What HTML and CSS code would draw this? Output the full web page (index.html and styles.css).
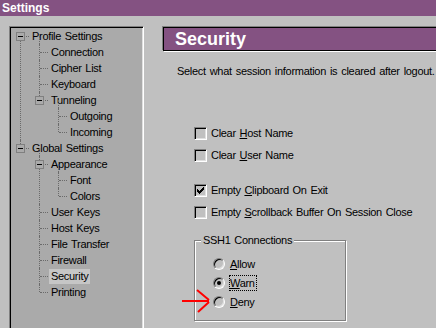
FILE: index.html
```html
<!DOCTYPE html>
<html lang="en">

<head>
  <title>Settings</title>
  <meta charset="utf-8" />
  <link rel="stylesheet" href="styles.css">
</head>

<body>
  <div class="titlebar">Settings</div>

  <div class="main">
    <div class="tree-panel">
      <ul class="tree">
        <li>
          <div class="row"><span class="twig"><span class="exp"></span></span><span class="lbl">Profile Settings</span></div>
          <ul>
            <li><div class="row"><span class="twig"></span><span class="lbl">Connection</span></div></li>
            <li><div class="row"><span class="twig"></span><span class="lbl">Cipher List</span></div></li>
            <li><div class="row"><span class="twig"></span><span class="lbl">Keyboard</span></div></li>
            <li>
              <div class="row"><span class="twig"><span class="exp"></span></span><span class="lbl">Tunneling</span></div>
              <ul>
                <li><div class="row"><span class="twig"></span><span class="lbl">Outgoing</span></div></li>
                <li><div class="row"><span class="twig"></span><span class="lbl">Incoming</span></div></li>
              </ul>
            </li>
          </ul>
        </li>
        <li>
          <div class="row"><span class="twig"><span class="exp"></span></span><span class="lbl">Global Settings</span></div>
          <ul>
            <li>
              <div class="row"><span class="twig"><span class="exp"></span></span><span class="lbl">Appearance</span></div>
              <ul>
                <li><div class="row"><span class="twig"></span><span class="lbl">Font</span></div></li>
                <li><div class="row"><span class="twig"></span><span class="lbl">Colors</span></div></li>
              </ul>
            </li>
            <li><div class="row"><span class="twig"></span><span class="lbl">User Keys</span></div></li>
            <li><div class="row"><span class="twig"></span><span class="lbl">Host Keys</span></div></li>
            <li><div class="row"><span class="twig"></span><span class="lbl">File Transfer</span></div></li>
            <li><div class="row"><span class="twig"></span><span class="lbl">Firewall</span></div></li>
            <li><div class="row"><span class="twig"></span><span class="lbl selected">Security</span></div></li>
            <li><div class="row"><span class="twig"></span><span class="lbl">Printing</span></div></li>
          </ul>
        </li>
      </ul>
    </div>

    <div class="pane">
      <div class="header">Security</div>
      <p class="desc">Select what session information is cleared after logout.</p>

      <div class="options">
        <div class="opt"><span class="check"></span><span>Clear <u>H</u>ost Name</span></div>
        <div class="opt"><span class="check"></span><span>Clear <u>U</u>ser Name</span></div>
        <div class="opt spaced"><span class="check">
            <svg width="7" height="7" viewBox="0 0 7 7" shape-rendering="crispEdges">
              <path d="M6 0h1v3h-1v1h-1v1h-1v1h-1v1h-1v-1h-1v-1h-1v-3h1v1h1v1h1v-1h1v-1h1z" fill="#000" />
            </svg>
          </span><span>Empty <u>C</u>lipboard On Exit</span></div>
        <div class="opt"><span class="check"></span><span>Empty <u>S</u>crollback Buffer On Session Close</span></div>
      </div>

      <div class="group">
        <span class="legend">SSH1 Connections</span>
        <div class="radio-row"><span class="radio"></span><span class="rlabel"><u>A</u>llow</span></div>
        <div class="radio-row"><span class="radio on"></span><span class="rlabel focus"><u>W</u>arn</span></div>
        <div class="radio-row"><span class="radio"></span><span class="rlabel"><u>D</u>eny</span></div>

        <svg class="arrow" width="34" height="26" viewBox="0 0 34 26">
          <path d="M2 13H29M17 2L29 12M29 14L18 24" stroke="#ff0000" stroke-width="2" fill="none" />
        </svg>
      </div>
    </div>
  </div>
</body>

</html>
```

FILE: styles.css
```css
body {
  margin: 0;
  overflow: hidden;
  background: #c0c0c0;
  font-family: "Liberation Sans", Arial, sans-serif;
  font-size: 11px;
  letter-spacing: -0.3px;
  word-spacing: 1px;
  color: #000;
}

.titlebar {
  height: 16px;
  line-height: 16px;
  padding-left: 2px;
  background: #845282;
  color: #fff;
  font-weight: bold;
  font-size: 12px;
  letter-spacing: 0;
  word-spacing: 0;
}

.main {
  display: flex;
  align-items: flex-start;
  height: 312px;
  overflow: hidden;
}

/* tree on the left */

.tree-panel {
  flex: none;
  box-sizing: border-box;
  width: 135px;
  height: 330px;
  margin: 10px 0 0 9px;
  padding: 1px 0 0 3px;
  background: #aaaaaa;
  border: 1px solid;
  border-color: #808080 #fff #fff #808080;
  box-shadow: inset 1px 1px #000, inset -1px -1px #dfdfdf;
}

.tree,
.tree ul {
  list-style: none;
  margin: 0;
  padding: 0;
}

.tree ul {
  margin-left: 19px;
  position: relative;
}

.tree ul::before {
  content: "";
  position: absolute;
  left: 7px;
  top: -8px;
  height: 8px;
  border-left: 1px dotted #6a6a6a;
}

.tree li {
  position: relative;
}

.tree li::before {
  content: "";
  position: absolute;
  left: 7px;
  top: 0;
  bottom: 0;
  border-left: 1px dotted #6a6a6a;
}

.tree li:last-child::before {
  bottom: auto;
  height: 8px;
}

.tree > li:first-child::before {
  top: 8px;
  height: auto;
  bottom: 0;
}

.row {
  display: flex;
  align-items: center;
  height: 16px;
}

.twig {
  position: relative;
  flex: none;
  width: 17px;
  height: 16px;
}

.twig::after {
  content: "";
  position: absolute;
  left: 8px;
  top: 8px;
  width: 8px;
  border-top: 1px dotted #6a6a6a;
}

.exp {
  position: absolute;
  z-index: 1;
  left: 3px;
  top: 4px;
  box-sizing: border-box;
  width: 9px;
  height: 9px;
  border: 1px solid #808080;
  background: #aaaaaa;
}

.exp::after {
  content: "";
  position: absolute;
  left: 1px;
  top: 3px;
  width: 5px;
  height: 1px;
  background: #000;
}

.lbl {
  padding: 0 2px;
  line-height: 15px;
  white-space: nowrap;
}

.lbl.selected {
  background: #c6c6c6;
}

/* right pane */

.pane {
  flex: none;
  margin: 11px 0 0 19px;
}

.header {
  box-sizing: border-box;
  width: 320px;
  height: 24px;
  padding-left: 11px;
  border: 1px solid #000;
  box-shadow: -1px -1px #808080, 1px 1px #fff;
  background: #845282;
  color: #fff;
  font-size: 18px;
  font-weight: bold;
  line-height: 22px;
  letter-spacing: 0;
  word-spacing: 0;
}

.desc {
  margin: 14px 0 0 14px;
  line-height: 13px;
  word-spacing: 1.2px;
  white-space: nowrap;
}

.options {
  margin: 44px 0 0 31px;
}

.opt {
  display: flex;
  align-items: center;
  gap: 4px;
  height: 22px;
}

.opt.spaced {
  margin-top: 13px;
}

.check {
  box-sizing: border-box;
  display: flex;
  align-items: center;
  justify-content: center;
  width: 13px;
  height: 13px;
  background: #c0c0c0;
  border: 1px solid;
  border-color: #808080 #fff #fff #808080;
  box-shadow: inset 1px 1px #000, inset -1px -1px #dfdfdf;
}

.group {
  position: relative;
  box-sizing: border-box;
  width: 152px;
  height: 81px;
  margin: 17px 0 0 31px;
  padding: 13px 0 0 18px;
  border: 1px solid #808080;
  box-shadow: 1px 1px #fff, inset 1px 1px #fff;
}

.legend {
  position: absolute;
  left: 6px;
  top: -7px;
  padding: 0 2px;
  background: #c0c0c0;
  line-height: 13px;
}

.radio-row {
  display: flex;
  align-items: center;
  gap: 4px;
  height: 19px;
}

.radio {
  box-sizing: border-box;
  position: relative;
  width: 12px;
  height: 12px;
  border-radius: 50%;
  background: #c0c0c0;
  border: 1px solid;
  border-color: #808080 #fff #fff #808080;
  box-shadow: inset 1px 1px #000, inset -1px -1px #dfdfdf;
}

.radio.on::after {
  content: "";
  position: absolute;
  left: 3px;
  top: 3px;
  width: 4px;
  height: 4px;
  border-radius: 50%;
  background: #000;
}

.rlabel {
  border: 1px solid transparent;
  line-height: 14px;
  white-space: nowrap;
}

.rlabel.focus {
  box-sizing: border-box;
  width: 28px;
  overflow: hidden;
  border: 1px dotted #000;
}

.arrow {
  position: absolute;
  left: -15px;
  top: 47px;
}
```
